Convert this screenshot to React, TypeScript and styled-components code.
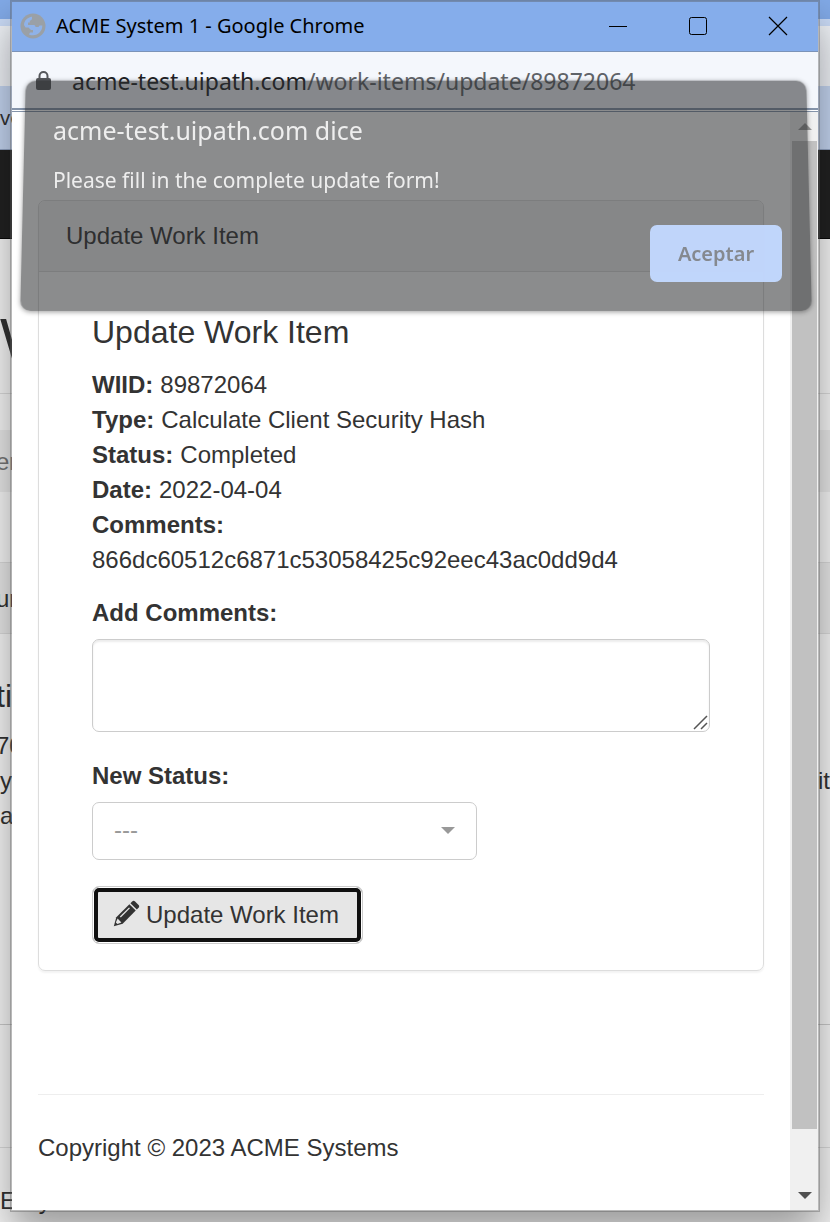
import React from "react";
import styled, { createGlobalStyle } from "styled-components";

const uiFont = `"Noto Sans", "Open Sans", sans-serif`;
const pageFont = `"Liberation Sans", Arial, sans-serif`;

const GlobalStyle = createGlobalStyle`
  *, *::before, *::after { box-sizing: border-box; }
  body { margin: 0; color: #333; font-family: ${pageFont}; font-size: 24px; line-height: 35px; }
  h1, h2, p, dl, dd { margin: 0; font-weight: 400; }
`;

const Desktop = styled.div`
  display: grid;
  grid-template-columns: minmax(0, 1fr);
  min-height: 100vh;
  overflow: hidden;
`;

const BackWindow = styled.div`
  grid-area: 1 / 1;
  display: flex;
  flex-direction: column;
  background: #f8f8f8;
  color: #333;
`;

const BackBar = styled.div<{ $height: number; $color?: string; $line?: string; $low?: boolean; $cut?: boolean }>`
  display: flex;
  align-items: center;
  justify-content: space-between;
  flex: none;
  height: ${(p) => p.$height}px;
  padding-top: ${(p) => (p.$low ? "30px" : "0")};
  background: ${(p) => p.$color ?? "transparent"};
  border-bottom: ${(p) => (p.$line ? `1px solid ${p.$line}` : "none")};
  text-indent: ${(p) => (p.$cut ? "-4px" : "0")};
`;

const BackBookmark = styled.span`
  font-family: ${uiFont};
  font-size: 20px;
`;

const BackTitle = styled.span`
  font-size: 60px;
`;

const BackHeading = styled.span`
  font-size: 32px;
`;

const BackMuted = styled.span`
  color: #777;
`;

const Popup = styled.div`
  grid-area: 1 / 1;
  z-index: 1;
  position: relative;
  display: flex;
  flex-direction: column;
  margin: 0 10px 10px;
  border: 2px solid rgba(90, 90, 90, 0.4);
  background: #fff;
  background-clip: padding-box;
  box-shadow: 0 22px 40px rgba(0, 0, 0, 0.38);
`;

const TitleBar = styled.header`
  display: flex;
  align-items: center;
  height: 50px;
  padding: 0 0 2px 8px;
  background: #85adeb;
  border-bottom: 1px solid #7b93b8;
  color: #000;
  font-family: ${uiFont};
  font-size: 20px;

  > svg { flex: none; }
`;

const WindowTitle = styled.span`
  flex: 1;
  padding-left: 10px;
  white-space: nowrap;
`;

const WindowButton = styled.button`
  display: grid;
  place-items: center;
  width: 80px;
  height: 47px;
  padding: 1px 0 0;
  border: 0;
  background: none;
`;

const AddressBar = styled.div`
  display: flex;
  align-items: center;
  gap: 21px;
  height: 58px;
  padding: 2px 24px 0;
  background: #f4f7fc;
  border-bottom: 2px solid #8594aa;
  color: #5f6368;
  font-family: ${uiFont};
  font-size: 23px;
`;

const Domain = styled.span`
  color: #202124;
`;

const Viewport = styled.div`
  display: flex;
  flex: 1;
  margin-top: 1px;
  border-top: 1px solid #8594aa;
`;

const Page = styled.main`
  flex: 1;
  min-width: 0;
  padding: 88px 26px 45px;
`;

const Panel = styled.section`
  border: 1px solid #ddd;
  border-radius: 7px;
  box-shadow: 0 2px 2px rgba(0, 0, 0, 0.05);
`;

const PanelHeader = styled.div`
  padding: 17px 27px 18px;
  background: #f5f5f5;
  border-bottom: 1px solid #ddd;
  border-radius: 6px 6px 0 0;
`;

const PanelForm = styled.form`
  display: flex;
  flex-direction: column;
  padding: 43px 53px 26px;
`;

const FormTitle = styled.h2`
  margin-bottom: 17px;
  font-size: 32px;
  line-height: 35px;
`;

const Details = styled.dl`
  margin-bottom: 18px;

  dt { font-weight: 700; }
`;

const DetailRow = styled.div`
  display: flex;
  flex-wrap: wrap;
  column-gap: 7px;
`;

const Field = styled.div`
  display: flex;
  flex-direction: column;
  gap: 9px;
  margin-bottom: 26px;

  label { font-weight: 700; }
`;

const Control = styled.div<{ $width?: number }>`
  position: relative;
  display: flex;
  max-width: ${(p) => (p.$width ? `${p.$width}px` : "none")};

  > svg { position: absolute; pointer-events: none; }
`;

const CommentBox = styled.textarea`
  width: 100%;
  height: 93px;
  padding: 10px 20px;
  border: 1px solid #ccc;
  border-radius: 7px;
  box-shadow: inset 0 2px 2px rgba(0, 0, 0, 0.08);
  background: #fff;
  font: inherit;
  resize: none;
`;

const Grip = styled.svg`
  right: 1px;
  bottom: 1px;
`;

const StatusSelect = styled.select`
  appearance: none;
  width: 100%;
  height: 58px;
  padding: 0 21px 3px;
  border: 1px solid #ccc;
  border-radius: 7px;
  background: #fff;
  color: #999;
  font: inherit;
`;

const Caret = styled.svg`
  right: 22px;
  top: 25px;
`;

const UpdateButton = styled.button`
  display: flex;
  align-items: center;
  align-self: flex-start;
  gap: 8px;
  height: 58px;
  padding: 0 23px 2px 20px;
  border: 1px solid #ccc;
  border-radius: 7px;
  background: #e6e6e6;
  box-shadow: inset 0 0 0 1px #fff, inset 0 0 0 5px #101010;
  color: #333;
  font: inherit;

  > svg { overflow: visible; }
`;

const Footer = styled.footer`
  margin-top: 123px;
  padding-top: 35px;
  border-top: 1px solid #eee;
`;

const Scrollbar = styled.div`
  display: flex;
  flex-direction: column;
  flex: none;
  width: 28px;
  padding: 0 1px 0 2px;
  background: #f0f0f0;
`;

const ScrollArrow = styled.div<{ $height: number; $end?: boolean }>`
  display: flex;
  align-items: ${(p) => (p.$end ? "flex-end" : "center")};
  justify-content: center;
  height: ${(p) => p.$height}px;
  padding-bottom: ${(p) => (p.$end ? "11px" : "0")};
`;

const Thumb = styled.div`
  flex: 1;
  background: #c1c1c1;
`;

const Dialog = styled.div`
  position: absolute;
  z-index: 1;
  top: 77px;
  left: 9px;
  right: 7px;
  display: flex;
  flex-direction: column;
  height: 232px;
  padding: 34px 29px 29px 32px;
  color: #eee;
  font-family: ${uiFont};

  /* the panel leans back a little while the dialog fades out */
  &::before {
    content: "";
    position: absolute;
    inset: 0 2px;
    z-index: -1;
    border-radius: 10px;
    background: rgba(41, 42, 45, 0.54);
    box-shadow: 0 1px 5px rgba(0, 0, 0, 0.4);
    transform: perspective(2000px) rotateX(7deg);
  }
`;

const DialogTitle = styled.h1`
  font-size: 25px;
  line-height: 35px;
`;

const DialogText = styled.p`
  margin-top: 15px;
  font-size: 21px;
  line-height: 35px;
`;

const AcceptButton = styled.button`
  align-self: flex-end;
  margin-top: auto;
  width: 132px;
  height: 57px;
  padding: 0;
  border: 0;
  border-radius: 7px;
  background: rgba(195, 217, 255, 0.96);
  color: #85898f;
  font-family: ${uiFont};
  font-size: 20px;
  font-weight: 600;
`;

const details = [
  ["WIID:", "89872064"],
  ["Type:", "Calculate Client Security Hash"],
  ["Status:", "Completed"],
  ["Date:", "2022-04-04"],
  ["Comments:", "866dc60512c6871c53058425c92eec43ac0dd9d4"],
];

function GlobeIcon() {
  return (
    <svg width="26" height="26" viewBox="0 0 26 26" aria-hidden="true">
      <circle cx="13" cy="13" r="12.500" fill="#9aa0a6" />
      <path
        d="M4 12C4 7.500 7.500 4.200 12 3.700V5.500C12 7 10.800 7.500 9.800 7.500V9.500H8V12H14C15 12 15.500 13 15.500 14H18.500L19.500 12.500H22.300C22.500 17.500 18.500 22.300 13 22.300C11.500 22.300 10.200 22 9 21.400L10 19.500H13V17H11L8.500 14.500H5.500Z"
        fill="#8fb2e8"
      />
    </svg>
  );
}

function LockIcon() {
  return (
    <svg width="15" height="20" viewBox="0 0 15 20" aria-hidden="true">
      <path d="M3.500 8V5A4 4 0 0 1 11.500 5V8" stroke="#54575b" strokeWidth="2" fill="none" />
      <rect x="0" y="7" width="15" height="12" rx="2" fill="#54575b" />
    </svg>
  );
}

function PencilIcon() {
  return (
    <svg width="25" height="25" viewBox="0 0 25 25" aria-hidden="true">
      <g transform="rotate(45 12.500 12.500)" fill="#333">
        <path d="M8 1V-1.500C8 -2.700 9 -3.500 10 -3.500H15C16 -3.500 17 -2.700 17 -1.500V1Z" />
        <path d="M8 2.500H17V21L12.500 29L8 21Z" />
        <path d="M10 5H11.300V18H10Z" fill="#e6e6e6" />
        <path d="M9.800 21H15.200L13.600 25H11.400Z" fill="#e6e6e6" />
      </g>
    </svg>
  );
}

function BackgroundBrowser() {
  return (
    <BackWindow aria-hidden="true">
      <BackBar $height={19} $color="#82aae8" />
      <BackBar $height={7} $color="#cbdcf8" />
      <BackBar $height={60} $color="#f1f4f9" />
      <BackBar $height={64} $color="#c6d7f3" $line="#93a5c4">
        <BackBookmark>ve</BackBookmark>
      </BackBar>
      <BackBar $height={89} $color="#222" $line="#080808" />
      <BackBar $height={46} />
      <BackBar $height={109} $line="#ddd">
        <BackTitle>W</BackTitle>
      </BackBar>
      <BackBar $height={36} />
      <BackBar $height={62} $color="#ebebeb" $cut>
        <BackMuted>er</BackMuted>
      </BackBar>
      <BackBar $height={71} $line="#ddd" />
      <BackBar $height={71} $color="#ebebeb" $line="#ddd" $cut>
        <span>ur</span>
      </BackBar>
      <BackBar $height={94} $low $cut>
        <BackHeading>ti</BackHeading>
      </BackBar>
      <BackBar $height={35} $cut>
        <span>70</span>
      </BackBar>
      <BackBar $height={35}>
        <span>y</span>
        <span>rit</span>
      </BackBar>
      <BackBar $height={35}>
        <span>a</span>
      </BackBar>
      <BackBar $height={192} $line="#ccc" />
      <BackBar $height={123} $line="#ddd" />
      <BackBar $height={74} $low>
        <span>E Sy</span>
      </BackBar>
    </BackWindow>
  );
}

export default function App() {
  return (
    <Desktop>
      <GlobalStyle />
      <BackgroundBrowser />
      <Popup>
        <TitleBar>
          <GlobeIcon />
          <WindowTitle>ACME System 1 - Google Chrome</WindowTitle>
          <WindowButton type="button" aria-label="Minimize">
            <svg width="20" height="20" viewBox="0 0 20 20">
              <path d="M1 10.500H19" stroke="#000" fill="none" />
            </svg>
          </WindowButton>
          <WindowButton type="button" aria-label="Maximize">
            <svg width="20" height="20" viewBox="0 0 20 20">
              <rect x="1.500" y="1.500" width="17" height="17" rx="2" stroke="#000" fill="none" />
            </svg>
          </WindowButton>
          <WindowButton type="button" aria-label="Close">
            <svg width="20" height="20" viewBox="0 0 20 20">
              <path d="M1 1L19 19M19 1L1 19" stroke="#000" strokeWidth="1.200" fill="none" />
            </svg>
          </WindowButton>
        </TitleBar>
        <AddressBar>
          <LockIcon />
          <span>
            <Domain>acme-test.uipath.com</Domain>/work-items/update/89872064
          </span>
        </AddressBar>
        <Viewport>
          <Page>
            <Panel>
              <PanelHeader>Update Work Item</PanelHeader>
              <PanelForm onSubmit={(e) => e.preventDefault()}>
                <FormTitle>Update Work Item</FormTitle>
                <Details>
                  {details.map(([name, value]) => (
                    <DetailRow key={name}>
                      <dt>{name}</dt>
                      <dd>{value}</dd>
                    </DetailRow>
                  ))}
                </Details>
                <Field>
                  <label htmlFor="comments">Add Comments:</label>
                  <Control>
                    <CommentBox id="comments" />
                    <Grip width="16" height="16" viewBox="0 0 16 16">
                      <path d="M1 14L14 1M8 14L14 8" stroke="#555" strokeWidth="1.500" fill="none" />
                    </Grip>
                  </Control>
                </Field>
                <Field>
                  <label htmlFor="status">New Status:</label>
                  <Control $width={385}>
                    <StatusSelect id="status">
                      <option>---</option>
                    </StatusSelect>
                    <Caret width="14" height="7" viewBox="0 0 14 7">
                      <path d="M0 0H14L7 7Z" fill="#999" />
                    </Caret>
                  </Control>
                </Field>
                <UpdateButton type="submit">
                  <PencilIcon />
                  Update Work Item
                </UpdateButton>
              </PanelForm>
            </Panel>
            <Footer>Copyright © 2023 ACME Systems</Footer>
          </Page>
          <Scrollbar aria-hidden="true">
            <ScrollArrow $height={29}>
              <svg width="14" height="7" viewBox="0 0 14 7">
                <path d="M0 7H14L7 0Z" fill="#999" />
              </svg>
            </ScrollArrow>
            <Thumb />
            <ScrollArrow $height={81} $end>
              <svg width="14" height="7" viewBox="0 0 14 7">
                <path d="M0 0H14L7 7Z" fill="#505050" />
              </svg>
            </ScrollArrow>
          </Scrollbar>
        </Viewport>
        <Dialog role="alertdialog" aria-labelledby="dialog-title" aria-describedby="dialog-text">
          <DialogTitle id="dialog-title">acme-test.uipath.com dice</DialogTitle>
          <DialogText id="dialog-text">Please fill in the complete update form!</DialogText>
          <AcceptButton type="button">Aceptar</AcceptButton>
        </Dialog>
      </Popup>
    </Desktop>
  );
}
